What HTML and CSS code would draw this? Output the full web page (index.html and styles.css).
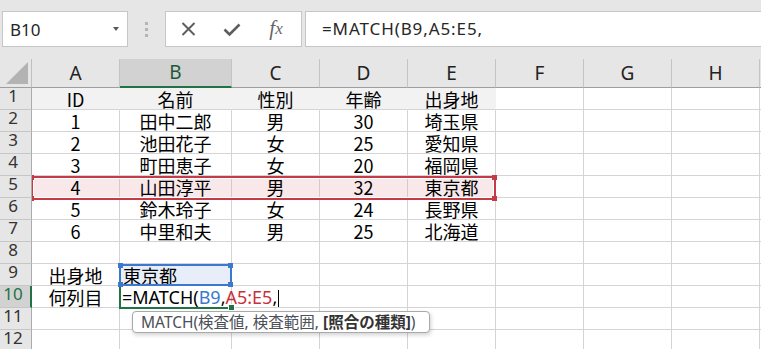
FILE: index.html
```html
<!DOCTYPE html>
<html lang="ja">
  <head>
    <meta charset="UTF-8" />
    <title>MATCH</title>
    <link rel="stylesheet" href="styles.css">
  </head>
  <body>
    <div class="topbar">
      <div class="namebox">
        <span>B10</span>
        <span class="caret"></span>
      </div>
      <div class="grip"><i></i><i></i><i></i></div>
      <div class="fxbox">
        <span class="btn">
          <svg width="15" height="14" viewBox="0 0 15 14"><path d="M1.5 1 L13.5 13 M13.5 1 L1.5 13" stroke="#5e5e5e" stroke-width="2" fill="none"/></svg>
        </span>
        <span class="btn">
          <svg width="18" height="13" viewBox="0 0 18 13"><path d="M1.5 6.5 L6.5 11.5 L16.5 1.5" stroke="#5e5e5e" stroke-width="2.6" fill="none"/></svg>
        </span>
        <span class="btn fx">f<small>x</small></span>
      </div>
      <div class="formula">=MATCH(B9,A5:E5,</div>
    </div>

    <div class="sheet">
      <div class="c corner"><svg width="31" height="28" viewBox="0 0 31 28"><path d="M6 25 L28 25 L28 3 Z" fill="#b3b3b3"/></svg></div>
      <div class="c ch">A</div>
      <div class="c ch sel">B</div>
      <div class="c ch">C</div>
      <div class="c ch">D</div>
      <div class="c ch">E</div>
      <div class="c ch">F</div>
      <div class="c ch">G</div>
      <div class="c ch">H</div>
      <div class="c ch end"></div>

      <div class="c rh">1</div>
      <div class="c g">ID</div><div class="c g">名前</div><div class="c g">性別</div><div class="c g">年齢</div><div class="c g">出身地</div>
      <div class="c"></div><div class="c"></div><div class="c"></div><div class="c end"></div>

      <div class="c rh">2</div>
      <div class="c">1</div><div class="c">田中二郎</div><div class="c">男</div><div class="c">30</div><div class="c">埼玉県</div>
      <div class="c"></div><div class="c"></div><div class="c"></div><div class="c end"></div>

      <div class="c rh">3</div>
      <div class="c">2</div><div class="c">池田花子</div><div class="c">女</div><div class="c">25</div><div class="c">愛知県</div>
      <div class="c"></div><div class="c"></div><div class="c"></div><div class="c end"></div>

      <div class="c rh">4</div>
      <div class="c">3</div><div class="c">町田恵子</div><div class="c">女</div><div class="c">20</div><div class="c">福岡県</div>
      <div class="c"></div><div class="c"></div><div class="c"></div><div class="c end"></div>

      <div class="c rh">5</div>
      <div class="c pink">4</div><div class="c pink">山田淳平</div><div class="c pink">男</div><div class="c pink">32</div><div class="c pink">東京都</div>
      <div class="c"></div><div class="c"></div><div class="c"></div><div class="c end"></div>

      <div class="c rh">6</div>
      <div class="c">5</div><div class="c">鈴木玲子</div><div class="c">女</div><div class="c">24</div><div class="c">長野県</div>
      <div class="c"></div><div class="c"></div><div class="c"></div><div class="c end"></div>

      <div class="c rh">7</div>
      <div class="c">6</div><div class="c">中里和夫</div><div class="c">男</div><div class="c">25</div><div class="c">北海道</div>
      <div class="c"></div><div class="c"></div><div class="c"></div><div class="c end"></div>

      <div class="c rh">8</div>
      <div class="c"></div><div class="c"></div><div class="c"></div><div class="c"></div><div class="c"></div>
      <div class="c"></div><div class="c"></div><div class="c"></div><div class="c end"></div>

      <div class="c rh">9</div>
      <div class="c">出身地</div><div class="c left blue">東京都</div><div class="c"></div><div class="c"></div><div class="c"></div>
      <div class="c"></div><div class="c"></div><div class="c"></div><div class="c end"></div>

      <div class="c rh sel">10</div>
      <div class="c">何列目</div>
      <div class="c left edit">=MATCH(<span class="ref-b">B9</span>,<span class="ref-r">A5:E5</span>,<span class="cursor"></span></div>
      <div class="c"></div><div class="c"></div><div class="c"></div>
      <div class="c"></div><div class="c"></div><div class="c"></div><div class="c end"></div>

      <div class="c rh">11</div>
      <div class="c"></div><div class="c"></div><div class="c"></div><div class="c"></div><div class="c"></div>
      <div class="c"></div><div class="c"></div><div class="c"></div><div class="c end"></div>

      <div class="c rh">12</div>
      <div class="c"></div><div class="c"></div><div class="c"></div><div class="c"></div><div class="c"></div>
      <div class="c"></div><div class="c"></div><div class="c"></div><div class="c end"></div>

      <!-- reference highlights drawn over the grid -->
      <div class="range-red">
        <i class="h tl"></i><i class="h tr"></i><i class="h bl"></i><i class="h br"></i>
      </div>
      <div class="active"><i class="fill-handle"></i></div>
      <div class="range-blue">
        <i class="h tl"></i><i class="h tr"></i><i class="h bl"></i><i class="h br"></i>
      </div>
      <div class="tip">MATCH(検査値, 検査範囲, <b>[照合の種類]</b>)</div>
    </div>
  </body>
</html>
```

FILE: styles.css
```css
body {
  margin: 0;
  width: 761px;
  height: 349px;
  overflow: hidden;
  background: #e6e6e6;
  font-family: "Noto Sans", "Noto Sans CJK JP", sans-serif;
}

/* formula bar */
.topbar {
  display: flex;
  align-items: flex-start;
  height: 59px;
  box-sizing: border-box;
  padding: 11px 0 0 2px;
}
.namebox,
.fxbox,
.formula {
  height: 36px;
  box-sizing: border-box;
  border: 1px solid #c6c6c6;
  background: #fff;
}
.namebox {
  width: 126px;
  display: flex;
  align-items: center;
  justify-content: space-between;
  padding: 0 8px 0 7px;
  font-size: 17px;
  color: #262626;
}
.caret {
  width: 0;
  height: 0;
  border-left: 3.5px solid transparent;
  border-right: 3.5px solid transparent;
  border-top: 4px solid #5a5a5a;
}
.grip {
  width: 37px;
  display: flex;
  flex-direction: column;
  align-items: center;
  gap: 3px;
  padding-top: 11px;
}
.grip i {
  display: block;
  width: 3px;
  height: 3px;
  background: #b5b5b5;
}
.fxbox {
  width: 137px;
  display: grid;
  grid-template-columns: repeat(3, 44px);
  align-items: center;
  justify-items: center;
}
.btn {
  display: flex;
  align-items: center;
}
.fx {
  font-family: "Liberation Serif", serif;
  font-style: italic;
  font-size: 21px;
  color: #666;
  line-height: 1;
  margin-top: -2px;
}
.fx small {
  font-size: 17px;
}
.formula {
  flex: 1;
  margin-left: 3px;
  border-right: none;
  padding-left: 16px;
  font-size: 17px;
  letter-spacing: 0.9px;
  line-height: 33px;
  color: #262626;
}

/* sheet grid */
.sheet {
  position: relative;
  display: grid;
  grid-template-columns: 32px 88px 112px repeat(6, 88px) 1fr;
  grid-template-rows: 29px;
  grid-auto-rows: 22px;
  background: #fff;
}
.c {
  box-sizing: border-box;
  border-right: 1px solid #d4d4d4;
  border-bottom: 1px solid #d4d4d4;
  font-family: "Noto Sans CJK JP", sans-serif;
  font-size: 18px;
  line-height: 19px;
  padding-top: 2px;
  text-align: center;
  white-space: nowrap;
  color: #000;
}
.c.end {
  border-right: none;
}
.corner {
  background: #e6e6e6;
  border-right-color: #c0c0c0;
  border-bottom-color: #9e9e9e;
  padding: 0;
}
.corner svg {
  display: block;
}
.ch {
  background: #e6e6e6;
  border-right-color: #c4c4c4;
  border-bottom-color: #9e9e9e;
  font-family: "Noto Sans", sans-serif;
  font-size: 19px;
  line-height: 28px;
  padding: 0;
  color: #222;
}
.ch.sel {
  background: #d2d2d2;
  border-bottom: 2px solid #217346;
  line-height: 27px;
  color: #1d5a37;
}
.rh {
  background: #e6e6e6;
  border-right-color: #ababab;
  border-bottom-color: #c6c6c6;
  font-family: "Noto Sans", sans-serif;
  font-size: 17px;
  line-height: 16px;
  padding: 0 5px 0 0;
  color: #333;
}
.rh.sel {
  background: #d2d2d2;
  border-right: 2px solid #217346;
  padding-right: 4px;
  color: #217346;
}
.g {
  background: #f2f2f2;
  border-right-color: #f2f2f2;
}
.pink {
  background: #f9e8ea;
  border-right-color: #d9c8ca;
}
.left {
  text-align: left;
  padding-left: 3px;
}
.blue {
  background: #e8eef9;
}
.edit {
  padding-left: 2px;
  font-family: "Noto Sans", "Noto Sans CJK JP", sans-serif;
}
.ref-b {
  color: #3b78d0;
}
.ref-r {
  color: #c8303c;
}
.cursor {
  display: inline-block;
  width: 1px;
  height: 17px;
  background: #000;
  vertical-align: -3px;
  margin-left: 1px;
}

/* overlays */
.range-red,
.range-blue,
.active {
  position: absolute;
  box-sizing: border-box;
}
.range-red {
  left: 32px;
  top: 117px;
  width: 464px;
  height: 24px;
  border: 2px solid #c43a46;
  border-left-width: 1px;
  box-shadow: inset 0 0 0 1px #fff;
}
.range-blue {
  left: 119px;
  top: 205px;
  width: 113px;
  height: 22px;
  border: 2px solid #3c78d0;
}
.active {
  left: 119px;
  top: 226px;
  width: 113px;
  height: 24px;
  border-left: 2px solid #217346;
  border-bottom: 2px solid #217346;
}
.h {
  position: absolute;
  width: 5px;
  height: 5px;
}
.range-red .h {
  background: #c43a46;
}
.range-blue .h {
  background: #3c78d0;
}
.h.tl { left: -3px; top: -3px; }
.h.tr { right: -3px; top: -3px; }
.h.bl { left: -3px; bottom: -3px; }
.h.br { right: -3px; bottom: -3px; }
.range-red .h.tl,
.range-red .h.bl {
  left: -1px;
  width: 2px;
}
.fill-handle {
  position: absolute;
  right: -3px;
  bottom: -4px;
  width: 5px;
  height: 5px;
  background: #217346;
  border: 1px solid #fff;
}
.tip {
  position: absolute;
  left: 132px;
  top: 252px;
  width: 298px;
  height: 22px;
  box-sizing: border-box;
  border: 1px solid #a9a9a9;
  border-radius: 4px;
  background: #fff;
  box-shadow: 1px 2px 4px rgba(0, 0, 0, 0.18);
  padding-left: 8px;
  font-family: "Noto Sans", "Noto Sans CJK JP", sans-serif;
  font-size: 15.5px;
  line-height: 20px;
  color: #4a4f57;
  white-space: nowrap;
}
.tip b {
  color: #333;
}
```
